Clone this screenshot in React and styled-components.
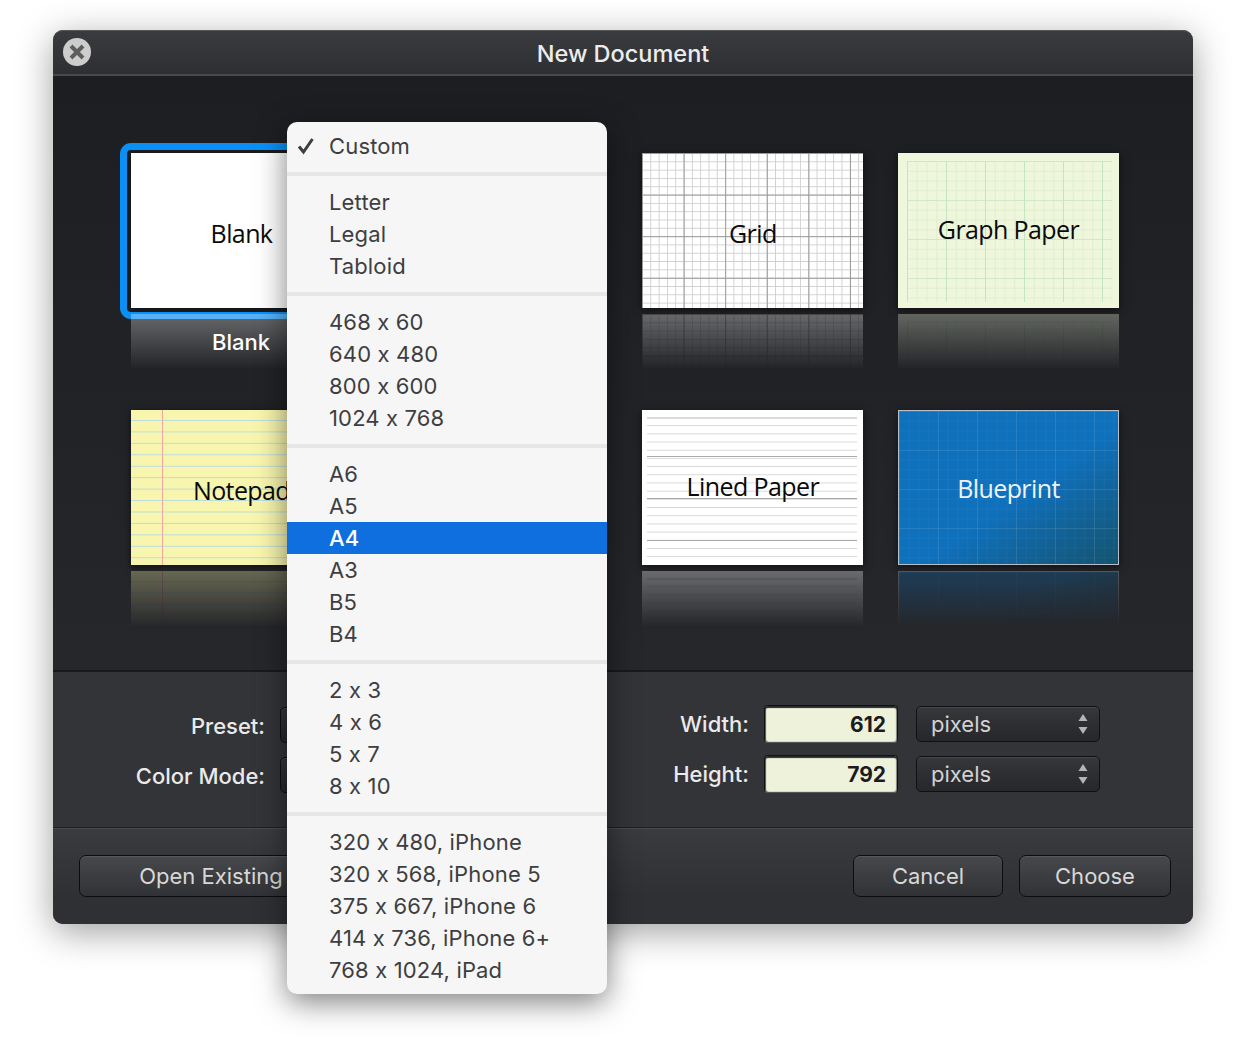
import React from 'react'
import styled, { createGlobalStyle, css } from 'styled-components'

const Global = createGlobalStyle`
  html, body { margin: 0; background: #fff; }
  body {
    font-family: Inter, "Liberation Sans", sans-serif;
    font-feature-settings: 'calt' 0;
  }
`

const vLine = (color) => `linear-gradient(90deg, ${color} 1px, transparent 1px)`
const hLine = (color) => `linear-gradient(${color} 1px, transparent 1px)`

const papers = {
  blank: css`background: #fff;`,
  grid: css`
    background-color: #fff;
    background-image: ${vLine('#9a9a9a')}, ${hLine('#9a9a9a')}, ${vLine('#d0d0d0')}, ${hLine('#d0d0d0')};
    background-size: 41.6px 41.6px, 41.6px 41.6px, 8.32px 8.32px, 8.32px 8.32px;
    background-position: 0 0, 0 0, 0 0, 0 0;
  `,
  graph: css`
    background-color: #eef6dc;
    &::before {
      content: '';
      position: absolute;
      inset: 8px 7px 6px 9px;
      background-image: ${vLine('#c4e5c0')}, ${hLine('#d0e8c6')}, ${vLine('#e2eed0')}, ${hLine('#e2eed0')};
      background-size: 39px 39px, 39px 39px, 9.75px 9.75px, 9.75px 9.75px;
    }
  `,
  notepad: css`
    background-color: #f8f5ae;
    background-image:
      linear-gradient(90deg, transparent 31px, #f0a8a0 31px 32px, transparent 32px),
      ${hLine('#b9dddc')};
    background-size: 100% 100%, 100% 11.45px;
    background-position: 0 0, 0 10px;
  `,
  lined: css`
    background: #fff;
    &::before {
      content: '';
      position: absolute;
      inset: 7px 6px 6px 5px;
      background-image:
        linear-gradient(#dadada 2px, transparent 2px),
        ${hLine('#a9a9a9')},
        ${hLine('#d6d6d6')};
      background-size: 100% 100%, 100% 42px, 100% 8.2px;
      background-position: 0 0, 0 39px, 0 0;
    }
  `,
  blueprint: css`
    border: 1px solid #b6bec6;
    box-sizing: border-box;
    background-color: #0f70bc;
    background-image:
      ${vLine('rgba(255,255,255,.07)')},
      ${hLine('rgba(255,255,255,.07)')},
      ${vLine('rgba(255,255,255,.035)')},
      ${hLine('rgba(255,255,255,.035)')},
      linear-gradient(145deg, #0f70bc 55%, #14536f 100%);
    background-size: 39px 39px, 39px 39px, 9.75px 9.75px, 9.75px 9.75px, 100% 100%;
  `,
}

const Page = styled.div`
  width: 1246px;
  height: 1050px;
  box-sizing: border-box;
  padding: 30px 53px 0;
  overflow: hidden;
`

const Window = styled.div`
  position: relative;
  width: 1140px;
  height: 894px;
  border-radius: 10px;
  background: #333438;
  box-shadow: 0 8px 36px rgba(0, 0, 0, 0.38);
`

const TitleBar = styled.div`
  height: 43px;
  display: grid;
  grid-template-columns: 1fr auto 1fr;
  align-items: center;
  padding: 0 10px;
  border-radius: 10px 10px 0 0;
  border-top: 1px solid #55565a;
  border-bottom: 2px solid #47484b;
  background: linear-gradient(#3a3b3f, #2e2f33);
`

const Close = styled.div`
  width: 28px;
  height: 28px;
  margin-top: -2px;
  border-radius: 50%;
  background: #cdcdcd;
  display: flex;
  align-items: center;
  justify-content: center;
`

const Title = styled.div`
  color: #ececec;
  font-size: 23.5px;
  font-weight: 500;
  padding-top: 1px;
`

const Gallery = styled.div`
  height: 517px;
  padding: 77px 0 0 78px;
  display: grid;
  grid-template-columns: repeat(4, 221px);
  grid-template-rows: 217px 217px;
  column-gap: 34.67px;
  row-gap: 40px;
  background: linear-gradient(#1d1e22, #26272b);
  border-bottom: 2px solid #18191c;
`

const Cell = styled.div`
  position: relative;
`

const Paper = styled.div`
  position: relative;
  height: 155px;
  display: flex;
  align-items: center;
  justify-content: center;
  color: ${(p) => (p.$kind === 'blueprint' ? '#eef4fa' : '#0a0a0a')};
  font-family: "Open Sans", sans-serif;
  font-size: 25px;
  letter-spacing: -0.6px;
  box-shadow: 0 2px 8px rgba(0, 0, 0, 0.55);
  ${(p) => papers[p.$kind]}
`

const PaperName = styled.span`
  position: relative;
  margin-top: ${(p) => p.$shift}px;
`

const Ring = styled.div`
  position: absolute;
  inset: -10px -10px -11px -11px;
  border: 7px solid #0a90f5;
  border-radius: 11px;
`

const Reflection = styled(Paper)`
  height: 56px;
  margin-top: 6px;
  opacity: 0.32;
  box-shadow: none;
  -webkit-mask-image: linear-gradient(#000, transparent);
  mask-image: linear-gradient(#000, transparent);
`

const Caption = styled.div`
  position: absolute;
  left: -1px;
  right: 0;
  top: 176px;
  text-align: center;
  color: #fff;
  font-size: 22px;
  font-weight: 500;
`

const Form = styled.div`
  height: 122px;
  padding-top: 33px;
  display: grid;
  grid-template-rows: 38px 38px;
  row-gap: 12px;
  background: #333438;
  border-bottom: 1px solid #1e1f22;
`

const Row = styled.div`
  display: grid;
  grid-template-columns: 212px 320px 134px 134px 187px;
  column-gap: 15px;
  align-items: center;
`

const Label = styled.div`
  text-align: right;
  color: #eaeaea;
  font-size: 22px;
  font-weight: 500;
  padding-top: ${(p) => (p.$low ? 4 : 0)}px;
`

const Select = styled.div`
  height: 36px;
  box-sizing: border-box;
  display: flex;
  align-items: center;
  justify-content: space-between;
  padding: 0 11px 0 14px;
  border: 1px solid #0f1013;
  border-radius: 5px;
  background: linear-gradient(#36373b, #26272b);
  box-shadow: inset 0 1px 0 #47484c;
  color: #d2d2d2;
  font-size: 22px;
  margin-left: ${(p) => p.$offset || 0}px;
  margin-top: ${(p) => p.$down || 0}px;
`

const NumberField = styled.div`
  height: 38px;
  box-sizing: border-box;
  border: 1px solid #101114;
  border-bottom-color: #55565a;
  border-radius: 4px;
  padding: 1px 11px 0 0;
  display: flex;
  align-items: center;
  justify-content: flex-end;
  background: #eff2da;
  box-shadow: inset 0 2px 1px #26272a, inset 1px 0 1px #55565a, inset -1px 0 1px #8a8b80;
  color: #1c1c1c;
  font-size: 21px;
  font-weight: 700;
`

const Footer = styled.div`
  height: 96px;
  box-sizing: border-box;
  display: flex;
  gap: 16px;
  padding: 26px 22px 0 26px;
  border-top: 1px solid #4a4b4f;
  border-radius: 0 0 10px 10px;
  background: linear-gradient(#3a3b3f, #2f3034 70%);
`

const Button = styled.div`
  width: ${(p) => p.$width}px;
  height: 42px;
  box-sizing: border-box;
  margin-left: ${(p) => (p.$push ? 'auto' : 0)};
  display: flex;
  align-items: center;
  justify-content: center;
  border: 1px solid #0c0d10;
  border-radius: 7px;
  background: linear-gradient(#47484c, #313236);
  box-shadow: inset 0 1px 0 #57585c;
  color: #d8d8d8;
  font-size: 22px;
`

const Menu = styled.div`
  position: absolute;
  left: 234px;
  top: 92px;
  width: 320px;
  padding: 8px 0;
  box-sizing: border-box;
  border-radius: 10px;
  background: #f6f6f6;
  box-shadow: 0 8px 30px rgba(0, 0, 0, 0.5);
  color: #3e3e41;
  font-size: 22px;
  letter-spacing: 0.15px;
`

const MenuGroup = styled.div`
  padding: 10px 0;
  border-top: 4px solid #e6e6e6;
  &:first-child {
    padding-top: 0;
    border-top: 0;
  }
  &:last-child {
    padding-bottom: 0;
  }
`

const MenuItem = styled.div`
  position: relative;
  height: 32px;
  line-height: 32px;
  padding-left: 42px;
  ${(p) =>
    p.$active &&
    css`
      background: #106fdf;
      color: #fff;
      font-weight: 500;
    `}
`

const Check = styled.svg`
  position: absolute;
  left: 10px;
  top: 7px;
`

const menuGroups = [
  ['Custom'],
  ['Letter', 'Legal', 'Tabloid'],
  ['468 x 60', '640 x 480', '800 x 600', '1024 x 768'],
  ['A6', 'A5', 'A4', 'A3', 'B5', 'B4'],
  ['2 x 3', '4 x 6', '5 x 7', '8 x 10'],
  ['320 x 480, iPhone', '320 x 568, iPhone 5', '375 x 667, iPhone 6', '414 x 736, iPhone 6+', '768 x 1024, iPad'],
]

const templates = [
  { kind: 'blank', name: 'Blank', shift: 5, selected: true },
  null,
  { kind: 'grid', name: 'Grid', shift: 5 },
  { kind: 'graph', name: 'Graph Paper', shift: -3 },
  { kind: 'notepad', name: 'Notepad', shift: 5 },
  null,
  { kind: 'lined', name: 'Lined Paper', shift: -3 },
  { kind: 'blueprint', name: 'Blueprint', shift: 1 },
]

const Stepper = () => (
  <svg width="10" height="22" viewBox="0 0 10 22">
    <path d="M5 1 9.5 8H.5z" fill="#b4b4b4" />
    <path d="M5 21 9.5 14H.5z" fill="#b4b4b4" />
  </svg>
)

const App = () => (
  <Page>
    <Global />
    <Window>
      <TitleBar>
        <Close>
          <svg width="16" height="16" viewBox="0 0 16 16">
            <path d="M2 2 14 14M14 2 2 14" stroke="#5d5d5d" strokeWidth="4" />
          </svg>
        </Close>
        <Title>New Document</Title>
      </TitleBar>

      <Gallery>
        {templates.map((t, i) =>
          t ? (
            <Cell key={t.kind}>
              <Paper $kind={t.kind}>
                <PaperName $shift={t.shift}>{t.name}</PaperName>
                {t.selected && <Ring />}
              </Paper>
              <Reflection $kind={t.kind} />
              {t.selected && <Caption>{t.name}</Caption>}
            </Cell>
          ) : (
            <div key={i} />
          )
        )}
      </Gallery>

      <Form>
        <Row>
          <Label $low>Preset:</Label>
          <Select $down={2} />
          <Label>Width:</Label>
          <NumberField>612</NumberField>
          <Select $offset={3}>
            pixels
            <Stepper />
          </Select>
        </Row>
        <Row>
          <Label $low>Color Mode:</Label>
          <Select $down={2} />
          <Label>Height:</Label>
          <NumberField>792</NumberField>
          <Select $offset={3}>
            pixels
            <Stepper />
          </Select>
        </Row>
      </Form>

      <Footer>
        <Button $width={264}>Open Existing</Button>
        <Button $width={150} $push>Cancel</Button>
        <Button $width={152}>Choose</Button>
      </Footer>

      <Menu>
        {menuGroups.map((group) => (
          <MenuGroup key={group[0]}>
            {group.map((item) => (
              <MenuItem key={item} $active={item === 'A4'}>
                {item === 'Custom' && (
                  <Check width="18" height="18" viewBox="0 0 18 18">
                    <path d="M2 9.5 6.5 15 15.5 2" fill="none" stroke="#3e3e41" strokeWidth="3" />
                  </Check>
                )}
                {item}
              </MenuItem>
            ))}
          </MenuGroup>
        ))}
      </Menu>
    </Window>
  </Page>
)

export default App
